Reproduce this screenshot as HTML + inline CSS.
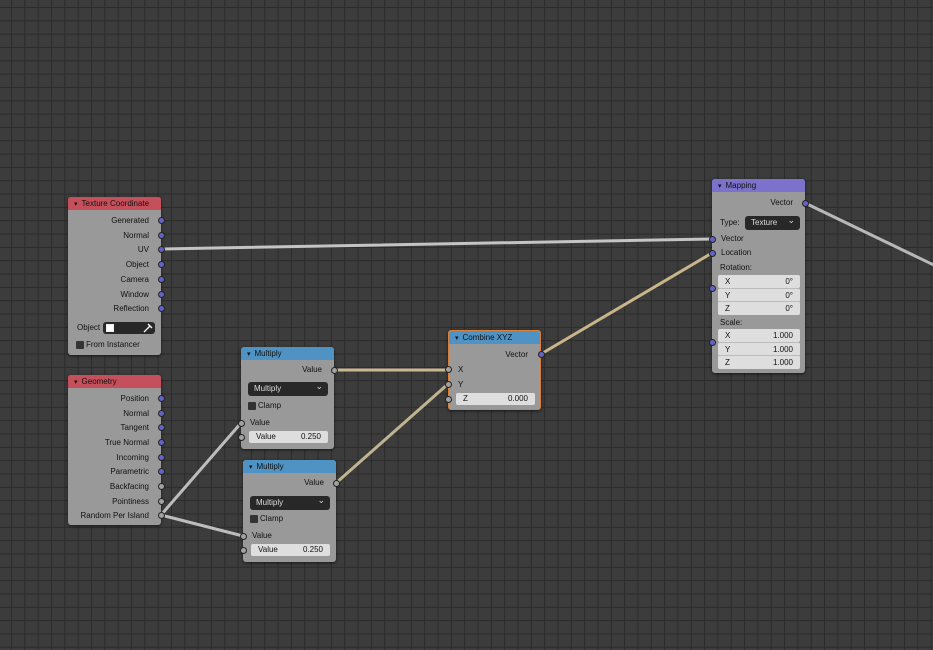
<!DOCTYPE html>
<html><head><meta charset="utf-8"><style>
*{margin:0;padding:0;box-sizing:border-box}
body{width:933px;height:650px;overflow:hidden;position:relative;font-family:"Liberation Sans",sans-serif;font-size:8px;color:#111;
background-color:#3c3c3c;
background-image:linear-gradient(to right,#2b2b2b 1px,transparent 1px),linear-gradient(to bottom,#2b2b2b 1px,transparent 1px);
background-size:13.33px 13.33px;background-position:11px 7px}
.n{position:absolute;background:#999;border-radius:3px;box-shadow:0 1px 3px rgba(0,0,0,.6)}
.h{position:absolute;left:0;right:0;top:0;height:13px;border-radius:3px 3px 0 0;padding-left:6px;line-height:14px;color:#111}
.h:before{content:"▾";font-size:7px;margin-right:4px}
.t{position:absolute;white-space:nowrap;line-height:12px}
.r{right:12px;text-align:right}
.s{position:absolute;width:7px;height:7px;border-radius:50%;border:1px solid #222;background:#6363c7}
.g{background:#a1a1a1}
.f{position:absolute;background:#dedede;border-radius:2px;line-height:12px;padding:0 7px}
.d{position:absolute;background:#282828;border-radius:3px;color:#ddd;line-height:14px;padding-left:6px}
.d:after{content:"⌄";position:absolute;right:5px;top:-3px;font-size:9px}
.cb{position:absolute;width:8px;height:8px;background:#333;border-radius:1px}
svg{position:absolute;left:0;top:0}
</style></head><body>
<svg width="933" height="650">
<g fill="none" stroke-width="3" stroke-linecap="round">
<path d="M161 249 L712 239" stroke="#c4c4c4"/>
<path d="M805 203 L940 268" stroke="#b8b8b8"/>
<path d="M541 354 L712 253" stroke="#c8b58a"/>
<path d="M334 370 L448 370" stroke="#c9b890"/>
<path d="M336 483 L448 384" stroke="#c0b490"/>
<path d="M161 515 L241 423" stroke="#bdbdbd"/>
<path d="M161 515 L243 536" stroke="#bdbdbd"/>
</g></svg>

<!-- Texture Coordinate -->
<div class="n" style="left:68px;top:197px;width:93px;height:158px">
<div class="h" style="background:#c5505c">Texture Coordinate</div>
<div class="t r" style="top:18px">Generated</div>
<div class="t r" style="top:33px">Normal</div>
<div class="t r" style="top:47px">UV</div>
<div class="t r" style="top:62px">Object</div>
<div class="t r" style="top:77px">Camera</div>
<div class="t r" style="top:92px">Window</div>
<div class="t r" style="top:106px">Reflection</div>
<div class="t" style="left:9px;top:125px">Object</div>
<div style="position:absolute;left:35px;top:125px;width:52px;height:12px;background:#282828;border-radius:3px">
<span style="position:absolute;left:3px;top:2px;width:8px;height:8px;border:1px solid #eee;background:#fff"></span>
<svg width="52" height="12" style="left:0;top:0"><path d="M41 10 L47 4 M45 2 L49 6" stroke="#fff" stroke-width="1.3" fill="none"/></svg></div>
<div class="cb" style="left:8px;top:144px"></div>
<div class="t" style="left:18px;top:142px">From Instancer</div>
</div>
<div class="s" style="left:158px;top:217px"></div>
<div class="s" style="left:158px;top:232px"></div>
<div class="s" style="left:158px;top:246px"></div>
<div class="s" style="left:158px;top:261px"></div>
<div class="s" style="left:158px;top:276px"></div>
<div class="s" style="left:158px;top:291px"></div>
<div class="s" style="left:158px;top:305px"></div>

<!-- Geometry -->
<div class="n" style="left:68px;top:375px;width:93px;height:150px">
<div class="h" style="background:#c5505c">Geometry</div>
<div class="t r" style="top:18px">Position</div>
<div class="t r" style="top:33px">Normal</div>
<div class="t r" style="top:47px">Tangent</div>
<div class="t r" style="top:62px">True Normal</div>
<div class="t r" style="top:77px">Incoming</div>
<div class="t r" style="top:91px">Parametric</div>
<div class="t r" style="top:106px">Backfacing</div>
<div class="t r" style="top:121px">Pointiness</div>
<div class="t r" style="top:135px">Random Per Island</div>
</div>
<div class="s" style="left:158px;top:395px"></div>
<div class="s" style="left:158px;top:410px"></div>
<div class="s" style="left:158px;top:424px"></div>
<div class="s" style="left:158px;top:439px"></div>
<div class="s" style="left:158px;top:454px"></div>
<div class="s" style="left:158px;top:468px"></div>
<div class="s g" style="left:158px;top:483px"></div>
<div class="s g" style="left:158px;top:498px"></div>
<div class="s g" style="left:158px;top:512px"></div>

<!-- Multiply 1 -->
<div class="n" style="left:241px;top:347px;width:93px;height:102px">
<div class="h" style="background:#4f93c4">Multiply</div>
<div class="t r" style="top:17px">Value</div>
<div class="d" style="left:7px;top:35px;width:80px">Multiply</div>
<div class="cb" style="left:7px;top:55px"></div>
<div class="t" style="left:17px;top:53px">Clamp</div>
<div class="t" style="left:9px;top:70px">Value</div>
<div class="f" style="left:8px;top:84px;width:79px">Value<span style="float:right">0.250</span></div>
</div>
<div class="s g" style="left:331px;top:367px"></div>
<div class="s g" style="left:238px;top:420px"></div>
<div class="s g" style="left:238px;top:434px"></div>

<!-- Multiply 2 -->
<div class="n" style="left:243px;top:460px;width:93px;height:102px">
<div class="h" style="background:#4f93c4">Multiply</div>
<div class="t r" style="top:17px">Value</div>
<div class="d" style="left:7px;top:36px;width:80px">Multiply</div>
<div class="cb" style="left:7px;top:55px"></div>
<div class="t" style="left:17px;top:53px">Clamp</div>
<div class="t" style="left:9px;top:70px">Value</div>
<div class="f" style="left:8px;top:84px;width:79px">Value<span style="float:right">0.250</span></div>
</div>
<div class="s g" style="left:333px;top:480px"></div>
<div class="s g" style="left:240px;top:533px"></div>
<div class="s g" style="left:240px;top:547px"></div>

<!-- Combine XYZ -->
<div class="n" style="left:448px;top:330px;width:93px;height:80px;border:1px solid #d9803a">
<div class="h" style="background:#4f93c4">Combine XYZ</div>
<div class="t r" style="top:18px">Vector</div>
<div class="t" style="left:9px;top:33px">X</div>
<div class="t" style="left:9px;top:48px">Y</div>
<div class="f" style="left:7px;top:62px;width:79px">Z<span style="float:right">0.000</span></div>
</div>
<div class="s" style="left:538px;top:351px"></div>
<div class="s g" style="left:445px;top:366px"></div>
<div class="s g" style="left:445px;top:381px"></div>
<div class="s g" style="left:445px;top:396px"></div>

<!-- Mapping -->
<div class="n" style="left:712px;top:179px;width:93px;height:194px">
<div class="h" style="background:#7c72cc">Mapping</div>
<div class="t r" style="top:18px">Vector</div>
<div class="t" style="left:8px;top:38px">Type:</div>
<div class="d" style="left:33px;top:37px;width:55px">Texture</div>
<div class="t" style="left:9px;top:54px">Vector</div>
<div class="t" style="left:9px;top:68px">Location</div>
<div class="t" style="left:8px;top:83px">Rotation:</div>
<div class="f" style="left:6px;top:96px;width:82px;line-height:13px">X<span style="float:right">0°</span></div>
<div class="f" style="left:6px;top:109px;width:82px;line-height:13px;border-top:1px solid #bbb">Y<span style="float:right">0°</span></div>
<div class="f" style="left:6px;top:122px;width:82px;line-height:13px;border-top:1px solid #bbb">Z<span style="float:right">0°</span></div>
<div class="t" style="left:8px;top:138px">Scale:</div>
<div class="f" style="left:6px;top:150px;width:82px;line-height:13px">X<span style="float:right">1.000</span></div>
<div class="f" style="left:6px;top:163px;width:82px;line-height:13px;border-top:1px solid #bbb">Y<span style="float:right">1.000</span></div>
<div class="f" style="left:6px;top:176px;width:82px;line-height:13px;border-top:1px solid #bbb">Z<span style="float:right">1.000</span></div>
</div>
<div class="s" style="left:802px;top:200px"></div>
<div class="s" style="left:709px;top:236px"></div>
<div class="s" style="left:709px;top:250px"></div>
<div class="s" style="left:709px;top:285px"></div>
<div class="s" style="left:709px;top:339px"></div>
</body></html>
